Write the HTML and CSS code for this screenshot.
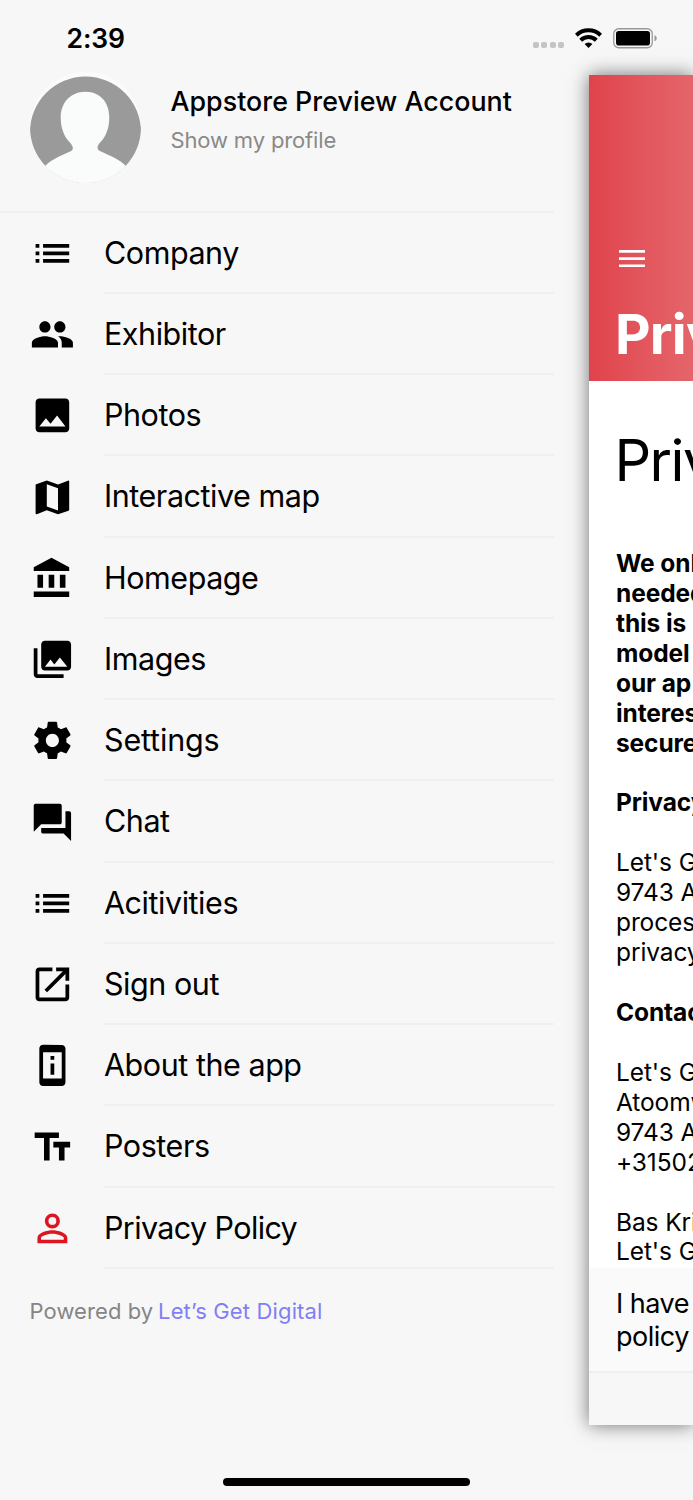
FILE: index.html
```html
<!DOCTYPE html>
<html lang="en">
<head>
<meta charset="utf-8">
<title>Menu</title>
<link rel="stylesheet" href="styles.css">
</head>
<body>
<header class="status">
  <span class="time">2:39</span>
  <div class="indicators">
    <span class="signal"><i></i><i></i><i></i><i></i></span>
    <svg class="wifi" viewBox="0 0 27 20"><g fill="none" stroke="#000" stroke-width="4"><path d="M1.300 7.200a17.500 17.500 0 0 1 24.400 0"/><path d="M5.700 12.200a11.200 11.200 0 0 1 15.600 0"/></g><path d="M9.600 16a5.700 5.700 0 0 1 7.800 0L13.500 20z"/></svg>
    <svg class="battery" viewBox="0 0 45 21"><rect x=".75" y=".75" width="38.500" height="19" rx="5" fill="none" stroke="#999" stroke-width="1.300"/><rect x="3" y="3" width="34" height="14.500" rx="2.800"/><path d="M41.500 7.300c3 1 3 5 0 6z" fill="#999"/></svg>
  </div>
</header>
<main class="stage">
  <nav class="drawer">
    <section class="profile">
      <svg class="avatar" viewBox="0 0 112 112"><defs><clipPath id="round"><circle cx="56" cy="56" r="56"/></clipPath></defs><g clip-path="url(#round)"><path fill="#fafcfb" d="M0 0h112v112H0z"/><circle cx="56" cy="60.500" r="56" fill="#9a9a9a"/><path fill="#fafcfb" d="M56 20c15 0 24 11 24 26 0 12-4 20-10 26-3 4-2 7 1 8 11 5 19 8 26 15l5 17H10l5-17c7-7 15-10 26-15 3-1 3-4 0-8-6-6-10-14-10-26 0-15 10-26 25-26z"/><path fill="#fafcfb" d="M15 95h82l30 30H-15z"/></g></svg>
      <div class="who"><div class="name">Appstore Preview Account</div><div class="sub">Show my profile</div></div>
    </section>
    <ul class="menu">
      <li><svg viewBox="0 0 24 24"><path d="M3 13h2v-2H3zm0 4h2v-2H3zm0-8h2V7H3zm4 4h14v-2H7zm0 4h14v-2H7zM7 7v2h14V7z"/></svg><span class="label">Company</span></li>
      <li><svg viewBox="0 0 24 24"><path d="M16 11c1.660 0 2.990-1.340 2.990-3S17.660 5 16 5s-3 1.340-3 3 1.340 3 3 3zm-8 0c1.660 0 2.990-1.340 2.990-3S9.660 5 8 5 5 6.340 5 8s1.340 3 3 3zm0 2c-2.330 0-7 1.170-7 3.500V19h14v-2.500c0-2.330-4.670-3.500-7-3.500zm8 0c-.29 0-.62.020-.97.050 1.160.84 1.970 1.970 1.970 3.450V19h6v-2.500c0-2.330-4.670-3.500-7-3.500z"/></svg><span class="label">Exhibitor</span></li>
      <li><svg viewBox="0 0 24 24"><path d="M21 19V5c0-1.100-.9-2-2-2H5c-1.100 0-2 .9-2 2v14c0 1.100.9 2 2 2h14c1.100 0 2-.9 2-2zM8.500 13.500l2.500 3.010L14.500 12l4.500 6H5l3.500-4.500z"/></svg><span class="label">Photos</span></li>
      <li><svg viewBox="0 0 24 24"><path d="M20.500 3l-.16.030L15 5.100 9 3 3.360 4.900c-.21.070-.36.250-.36.480V20.500c0 .28.220.5.500.5l.16-.03L9 18.900l6 2.100 5.640-1.900c.21-.07.360-.25.360-.48V3.500c0-.28-.22-.5-.5-.5zM15 19l-6-2.110V5l6 2.110V19z"/></svg><span class="label">Interactive map</span></li>
      <li><svg viewBox="0 0 24 24"><path d="M4 10v7h3v-7H4zm6 0v7h3v-7h-3zM2 22h19v-3H2v3zm14-12v7h3v-7h-3zm-4.500-9L2 6v2h19V6l-9.500-5z"/></svg><span class="label">Homepage</span></li>
      <li><svg viewBox="0 0 24 24"><path d="M22 16V4c0-1.100-.9-2-2-2H8c-1.100 0-2 .9-2 2v12c0 1.100.9 2 2 2h12c1.100 0 2-.9 2-2zm-11-4l2.030 2.710L16 11l4 5H8l3-4zM2 6v14c0 1.100.9 2 2 2h14v-2H4V6H2z"/></svg><span class="label">Images</span></li>
      <li><svg viewBox="0 0 24 24"><path d="M19.430 12.980c.04-.32.070-.64.070-.98s-.03-.66-.07-.98l2.110-1.650c.19-.15.240-.42.120-.64l-2-3.460c-.12-.22-.39-.3-.61-.22l-2.490 1c-.52-.4-1.080-.73-1.690-.98l-.38-2.650C14.460 2.180 14.250 2 14 2h-4c-.25 0-.46.180-.49.420l-.38 2.650c-.61.250-1.170.590-1.690.98l-2.490-1c-.23-.09-.49 0-.61.220l-2 3.460c-.13.220-.07.490.12.640l2.110 1.650c-.04.320-.07.650-.07.980s.03.660.070.980l-2.110 1.650c-.19.150-.24.420-.12.640l2 3.460c.12.220.39.300.61.220l2.490-1c.52.400 1.080.730 1.690.980l.38 2.650c.03.240.24.420.49.420h4c.25 0 .46-.18.490-.42l.38-2.650c.61-.25 1.170-.59 1.690-.98l2.490 1c.23.090.49 0 .61-.22l2-3.460c.12-.22.070-.49-.12-.64l-2.110-1.650zM12 15.500c-1.930 0-3.500-1.570-3.500-3.500s1.570-3.500 3.500-3.500 3.500 1.570 3.500 3.500-1.570 3.500-3.500 3.500z"/></svg><span class="label loose">Settings</span></li>
      <li><svg viewBox="0 0 24 24"><path d="M21 6h-2v9H6v2c0 .55.450 1 1 1h11l4 4V7c0-.55-.45-1-1-1zm-4 6V3c0-.55-.45-1-1-1H3c-.55 0-1 .45-1 1v14l4-4h10c.55 0 1-.45 1-1z"/></svg><span class="label">Chat</span></li>
      <li><svg viewBox="0 0 24 24"><path d="M3 13h2v-2H3zm0 4h2v-2H3zm0-8h2V7H3zm4 4h14v-2H7zm0 4h14v-2H7zM7 7v2h14V7z"/></svg><span class="label">Acitivities</span></li>
      <li><svg viewBox="0 0 24 24"><path d="M19 19H5V5h7V3H5c-1.110 0-2 .9-2 2v14c0 1.100.89 2 2 2h14c1.100 0 2-.9 2-2v-7h-2v7zM14 3v2h3.590l-9.830 9.830 1.410 1.410L19 6.410V10h2V3h-7z"/></svg><span class="label">Sign out</span></li>
      <li><svg viewBox="0 0 24 24"><path d="M13 7h-2v2h2zm0 4h-2v6h2zm4-9.990L7 1c-1.100 0-2 .9-2 2v18c0 1.100.9 2 2 2h10c1.100 0 2-.9 2-2V3c0-1.100-.9-1.990-2-1.990zM17 19H7V5h10v14z"/></svg><span class="label">About the app</span></li>
      <li><svg viewBox="0 0 24 24"><path d="M2.500 4v3h5v12h3V7h5V4h-13zm19 5h-9v3h3v7h3v-7h3V9z"/></svg><span class="label">Posters</span></li>
      <li><svg class="red" viewBox="0 0 24 24"><path d="M12 5.900a2.100 2.100 0 1 1 0 4.200 2.100 2.100 0 0 1 0-4.200m0 9c2.970 0 6.100 1.460 6.100 2.100v1.100H5.900V17c0-.64 3.130-2.100 6.100-2.100M12 4C9.790 4 8 5.790 8 8s1.790 4 4 4 4-1.790 4-4-1.790-4-4-4zm0 9c-2.670 0-8 1.340-8 4v3h16v-3c0-2.660-5.330-4-8-4z"/></svg><span class="label tight">Privacy Policy</span></li>
    </ul>
    <p class="powered">Powered by <a>Let’s Get Digital</a></p>
  </nav>
  <article class="page">
    <header class="hero">
      <svg class="burger" viewBox="0 0 26 18"><path fill="#fff" d="M0 0h26v2.700H0zM0 7.200h26v2.700H0zM0 14.400h26v2.700H0z"/></svg>
      <div class="hero-title">Priv</div>
    </header>
    <div class="body">
      <h1>Priv</h1>
      <p class="strong">We onl<br>needed<br>this is<br>model<br>our ap<br>interes<br>secure</p>
      <p class="strong">Privacy</p>
      <p>Let's G<br>9743 A<br>proces<br>privacy</p>
      <p class="strong">Contac</p>
      <p>Let's G<br>Atoomw<br>9743 A<br>+31502</p>
      <p>Bas Kri<br>Let's G</p>
    </div>
    <div class="consent">I have<br>policy</div>
    <div class="foot"></div>
  </article>
</main>
<footer class="home"><span></span></footer>
</body>
</html>
```
FILE: styles.css
```css
* { box-sizing: border-box; }
html { overflow: hidden; }
body { margin: 0; width: 693px; height: 1500px; overflow: hidden; background: #f7f7f7; color: #000; font-family: Inter, "Liberation Sans", sans-serif; display: flex; flex-direction: column; }
.status { height: 75px; flex: none; padding: 22px 35px 0 66.500px; display: flex; justify-content: space-between; align-items: flex-start; }
.time { font-size: 26.500px; line-height: 33px; font-weight: 600; letter-spacing: -.1px; }
.indicators { display: flex; align-items: flex-start; padding-top: 5.500px; }
.signal { display: flex; gap: 2.500px; padding-top: 14.500px; margin-right: 11px; }
.signal i { width: 6px; height: 6px; border-radius: 2px; background: #c4c4c4; }
.wifi { width: 27px; height: 20px; margin-right: 11px; }
.battery { width: 45px; height: 21px; }
.stage { display: flex; align-items: flex-start; gap: 35px; height: 1350px; flex: none; }
.drawer { width: 554px; flex: none; }
.profile { height: 137.500px; border-bottom: 2px solid #f0f0f0; padding-left: 29.500px; display: flex; gap: 30px; }
.avatar { width: 111px; height: 111px; margin-top: -3px; }
.who { padding-top: 10px; white-space: nowrap; }
.name { font-size: 26.800px; line-height: 33px; font-weight: 500; letter-spacing: .03px; }
.sub { font-size: 22px; line-height: 30px; margin-top: 7px; color: #898989; letter-spacing: -.15px; }
.menu { list-style: none; margin: 0; padding: 0; }
.menu li { height: 81.250px; display: flex; align-items: center; padding-left: 29.600px; gap: 29.600px; }
.menu svg { width: 44.800px; height: 44.800px; flex: none; margin-top: .5px; }
.menu .red { fill: #dc1620; }
.label { flex: 1; height: 100%; line-height: 80px; font-size: 30.500px; letter-spacing: -.45px; white-space: nowrap; border-bottom: 2px solid #f0f0f0; }
.tight { letter-spacing: -.62px; }
.loose { letter-spacing: -.15px; }
.powered { margin: 25.500px 0 0 29.500px; font-size: 22px; line-height: 34px; color: #858585; letter-spacing: .08px; }
.powered a { color: #807ff5; margin-left: -1.500px; letter-spacing: .15px; }
.page { width: 104px; height: 1350px; flex: none; background: #fff; box-shadow: 0 0 18px rgba(0,0,0,.55); display: flex; flex-direction: column; white-space: nowrap; }
.hero { height: 306px; flex: none; overflow: hidden; padding: 174.500px 0 0 30px; background: linear-gradient(90deg, #e0434b 0, #e3565d 55px, #e4656b 104px); color: #fff; }
.burger { display: block; width: 26px; height: 18px; }
.hero-title { font-size: 55px; line-height: 66px; font-weight: 700; letter-spacing: -.8px; margin: 33.500px 0 0 -4px; }
.body { height: 887px; flex: none; overflow: hidden; padding: 45px 0 0 27px; font-size: 24.500px; line-height: 29.930px; letter-spacing: -.1px; }
.body h1 { margin: 0 0 54px -1.500px; font-size: 57.500px; line-height: 69px; font-weight: 400; letter-spacing: -1.600px; }
.body p { margin: 0 0 29.930px; }
.body .strong { font-weight: 700; }
.consent { height: 105px; flex: none; background: #fafafa; border-bottom: 2px solid #efefef; padding: 18.500px 0 0 27px; font-size: 27px; line-height: 33.500px; letter-spacing: -.5px; }
.foot { flex: 1; background: #f7f7f7; }
.home { display: flex; justify-content: center; padding-top: 53px; }
.home span { width: 247px; height: 8px; border-radius: 4px; background: #000; }
```
